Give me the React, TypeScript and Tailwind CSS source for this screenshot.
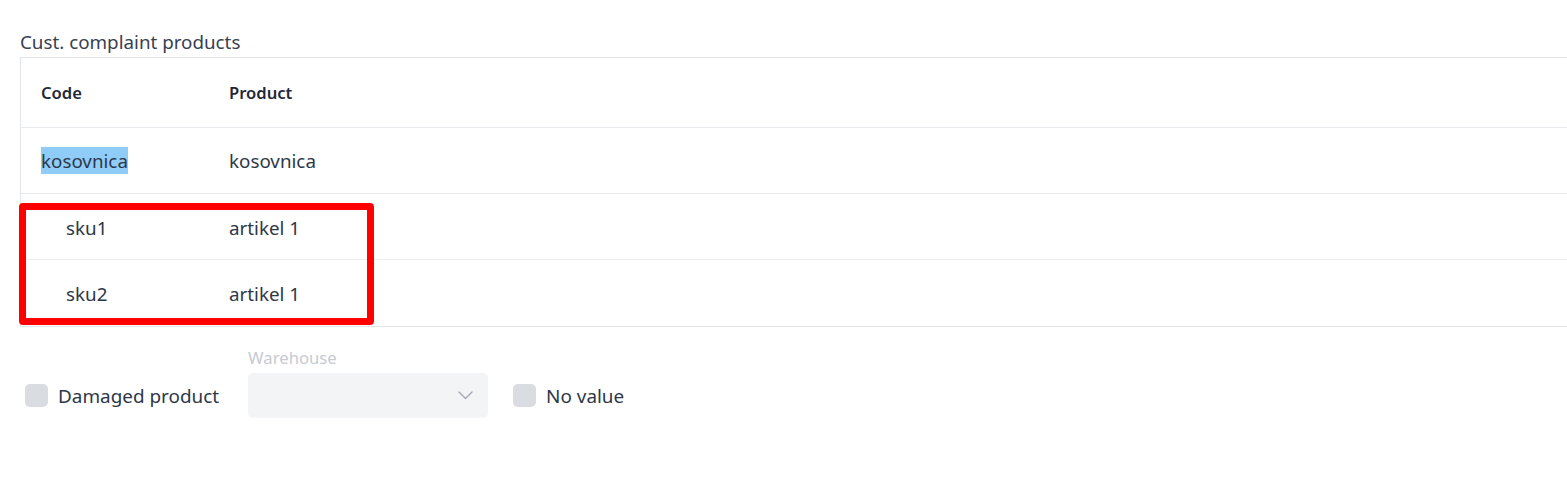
import React from "react";

function Checkbox({ label }: { label: string }) {
  return (
    <label className="flex h-[45px] items-center">
      <span className="h-[23px] w-[23px] rounded-[5px] bg-[#d9dde2]" />
      <span className="ml-[10px] text-[18.9px] leading-[24px] text-[#2d3748]">{label}</span>
    </label>
  );
}

export default function App() {
  return (
    <div
      className="min-h-[478px] w-full overflow-hidden bg-white pl-[20px] pt-[30px]"
      style={{ fontFamily: '"Noto Sans", "Open Sans", sans-serif' }}
    >
      <div className="mb-[3px] text-[18.8px] leading-[24px] text-[#374151]">Cust. complaint products</div>
      <div className="relative">
        <div className="border-b border-l border-t border-[#e2e5ea] text-[18.8px] text-[#2d3748]">
          <div className="grid h-[70px] grid-cols-[188px_1fr] items-center border-b border-[#e7e9ed] pt-[2px] text-[16.6px] font-semibold text-[#1f2937]">
            <div className="pl-[20px]">Code</div>
            <div className="pl-[20px]">Product</div>
          </div>
          <div className="grid h-[66px] grid-cols-[188px_1fr] items-center border-b border-[#e7e9ed] pt-[2px]">
            <div className="pl-[20px]">
              <span className="bg-[#8fcdf8] pb-0 pt-[1px] leading-[21px]">kosovnica</span>
            </div>
            <div className="pl-[20px]">kosovnica</div>
          </div>
          <div className="grid h-[66px] grid-cols-[188px_1fr] items-center border-b border-[#eceef1] pt-[3px]">
            <div className="pl-[45px]">sku1</div>
            <div className="pl-[20px]">artikel 1</div>
          </div>
          <div className="grid h-[66px] grid-cols-[188px_1fr] items-center pt-[2px]">
            <div className="pl-[45px]">sku2</div>
            <div className="pl-[20px]">artikel 1</div>
          </div>
        </div>
        <div className="pointer-events-none absolute left-[-1px] top-[146px] h-[122px] w-[355px] rounded-[4px] border-[7px] border-[#ff0000]" />
      </div>
      <div className="mt-[20px] flex items-end pl-[5px]">
        <Checkbox label="Damaged product" />
        <div className="ml-[29px] flex flex-col">
          <span className="mb-[4px] text-[16.7px] leading-[22px] text-[#c6cbd2]">Warehouse</span>
          <div className="flex h-[45px] w-[240px] items-center justify-end rounded-[5px] bg-[#f3f4f6] pr-[15px]">
            <svg width="15" height="9" viewBox="0 0 15 9" fill="none">
              <polyline points="1,1 7.5,7.5 14,1" stroke="#a3a9b3" strokeWidth="1.4" strokeLinecap="round" strokeLinejoin="round" />
            </svg>
          </div>
        </div>
        <div className="ml-[25px]">
          <Checkbox label="No value" />
        </div>
      </div>
    </div>
  );
}
